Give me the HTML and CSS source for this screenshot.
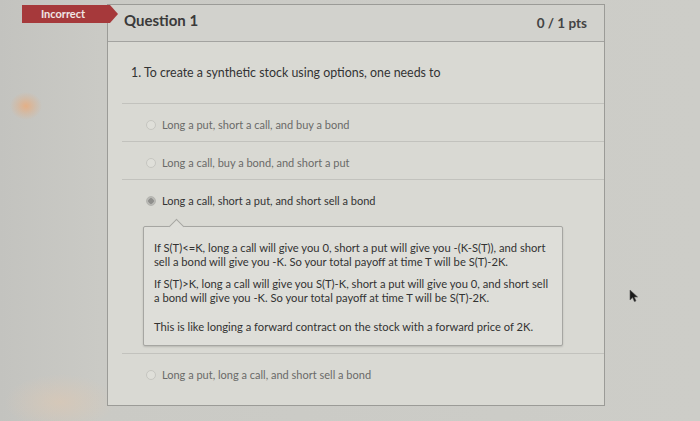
FILE: index.html
```html
<!DOCTYPE html>
<html>
<head>
<meta charset="utf-8">
<link rel="stylesheet" href="styles.css">
</head>
<body>
<div class="screen">
  <div class="gutter"></div>
  <div class="card">
    <div class="card-head">
      <span class="q-title">Question 1</span>
      <span class="q-pts">0 / 1 pts</span>
    </div>
    <div class="card-body">
      <p class="q-text">1. To create a synthetic stock using options, one needs to</p>
      <div class="answer">
        <span class="radio"></span><span class="a-text">Long a put, short a call, and buy a bond</span>
      </div>
      <div class="answer">
        <span class="radio"></span><span class="a-text">Long a call, buy a bond, and short a put</span>
      </div>
      <div class="answer selected">
        <div class="a-line"><span class="radio on"></span><span class="a-text">Long a call, short a put, and short sell a bond</span></div>
        <div class="comment">
          <p>If S(T)&lt;=K, long a call will give you 0, short a put will give you -(K-S(T)), and short sell a bond will give you -K. So your total payoff at time T will be S(T)-2K.</p>
          <p class="mid">If S(T)&gt;K, long a call will give you S(T)-K, short a put will give you 0, and short sell a bond will give you -K. So your total payoff at time T will be S(T)-2K.</p>
          <p class="last">This is like longing a forward contract on the stock with a forward price of 2K.</p>
        </div>
      </div>
      <div class="answer">
        <span class="radio"></span><span class="a-text">Long a put, long a call, and short sell a bond</span>
      </div>
    </div>
  </div>
  <div class="outside"></div>
  <div class="badge">Incorrect</div>
  <svg class="cursor" width="10" height="14" viewBox="0 0 10 14"><path d="M1 1 L1 11 L3.6 8.6 L5.4 12.6 L7 11.9 L5.3 8 L8.6 8 Z" fill="#1a1a1a" stroke="#555" stroke-width="0.6"/></svg>
</div>
</body>
</html>
```

FILE: styles.css
```css
html, body {
  margin: 0;
  padding: 0;
}
body {
  width: 700px;
  height: 421px;
  overflow: hidden;
  font-family: Lato, "Open Sans", sans-serif;
  background: #c9c9c4;
}
.screen {
  position: relative;
  width: 700px;
  height: 421px;
  display: flex;
  align-items: flex-start;
  background:
    radial-gradient(ellipse 16px 14px at 26px 106px, rgba(235,170,120,0.8) 0, rgba(225,175,135,0.4) 9px, rgba(200,190,180,0) 16px),
    radial-gradient(ellipse 55px 28px at 60px 402px, rgba(222,200,178,0.6), rgba(210,200,190,0)),
    linear-gradient(90deg, #c3c3bf 0, #cacac5 100px, #cdcdc8 100%);
}
.gutter {
  width: 107px;
  flex: none;
}
.card {
  width: 496px;
  flex: none;
  margin-top: 4px;
  height: 400px;
  border: 1px solid #9b9b97;
  background: #d9d9d3;
}
.card-head {
  height: 36px;
  background: #d2d2cd;
  border-bottom: 1px solid #a3a3a0;
  display: flex;
  align-items: center;
  justify-content: space-between;
  padding: 0 17px 0 16px;
}
.q-title {
  font-size: 15px;
  font-weight: 700;
  color: #3a3a3a;
  padding-bottom: 6px;
}
.q-pts {
  font-size: 13.5px;
  font-weight: 700;
  color: #444;
}
.q-text {
  margin: 23px 0 22px 23px;
  font-size: 12.4px;
  line-height: 16px;
  color: #333;
}
.answer {
  margin-left: 14px;
  border-top: 1px solid #c2c2bd;
  padding: 14px 0 10px 24px;
  font-size: 11px;
  line-height: 13px;
  color: #6a6a68;
  display: flex;
  align-items: center;
}
.answer.selected {
  display: block;
  padding-bottom: 7px;
}
.a-line {
  display: flex;
  align-items: center;
}
.selected .a-text {
  color: #333;
}
.radio {
  width: 8px;
  height: 8px;
  border-radius: 50%;
  border: 1px solid #c6c6c1;
  background: #dfdfd9;
  margin-right: 6px;
  flex: none;
}
.radio.on {
  background: radial-gradient(circle, #8f8f8c 0 2.5px, #b9b9b5 3px);
  border-color: #b5b5b0;
}
.comment {
  position: relative;
  margin: 19px 0 0 -3px;
  width: 397px;
  border: 1px solid #a6a6a2;
  border-radius: 2px;
  background: #dedeD9;
  box-shadow: 0 1px 2px rgba(0,0,0,0.15);
  padding: 14px 11px 11px 10px;
  font-size: 11.2px;
  line-height: 14px;
  color: #333;
}
.comment::before {
  content: "";
  position: absolute;
  left: 27px;
  top: -6px;
  width: 10px;
  height: 10px;
  background: #dedeD9;
  border-left: 1px solid #a6a6a2;
  border-top: 1px solid #a6a6a2;
  transform: rotate(45deg);
}
.comment p {
  margin: 0 0 8px 0;
}
.comment p.mid {
  margin-bottom: 15px;
}
.comment p.last {
  margin: 0;
}
.outside {
  flex: 1;
}
.badge {
  position: absolute;
  left: 22px;
  top: 5px;
  width: 88px;
  height: 18px;
  background: #a6393b;
  color: #f1e6e6;
  font-size: 11px;
  font-weight: 700;
  line-height: 18px;
  text-align: center;
  box-sizing: border-box;
  padding-right: 6px;
}
.badge::after {
  content: "";
  position: absolute;
  right: -8px;
  top: 0;
  border-left: 8px solid #a6393b;
  border-top: 9px solid transparent;
  border-bottom: 9px solid transparent;
}
.cursor {
  position: absolute;
  left: 629px;
  top: 289px;
}
```
